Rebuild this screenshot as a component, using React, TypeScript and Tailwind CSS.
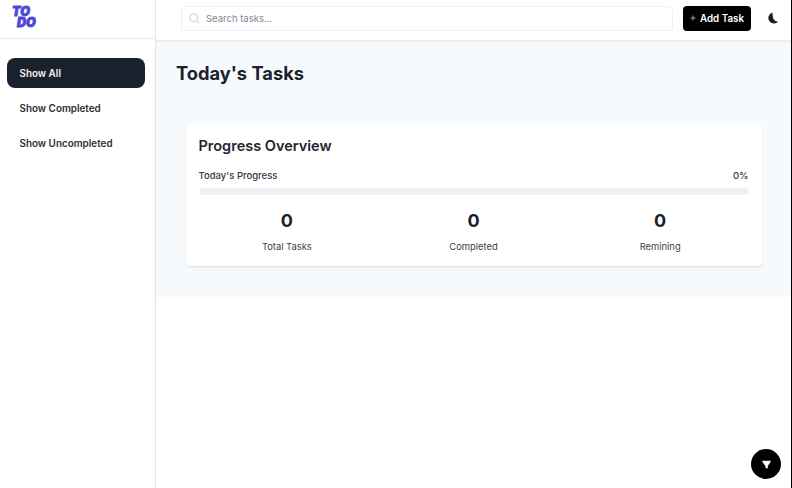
import React from "react";

const navItems = ["Show All", "Show Completed", "Show Uncompleted"];

const stats = [
  { value: 0, label: "Total Tasks" },
  { value: 0, label: "Completed" },
  { value: 0, label: "Remining" },
];

function Logo() {
  return (
    <div className="flex h-[39px] shrink-0 flex-col items-start border-b border-[#e8eaed] pt-[6px] pl-[12px] font-['Inter',sans-serif] text-[12.5px] leading-[11px] font-black text-[#4f46d8] italic [-webkit-text-stroke:0.8px_#4f46d8]">
      <span className="h-[11px]">TO</span>
      <span className="ml-[5px] h-[11px]">DO</span>
    </div>
  );
}

function Sidebar() {
  return (
    <aside className="flex w-[156px] shrink-0 flex-col border-r border-[#e2e5e9]">
      <Logo />
      <nav className="flex flex-col gap-[5px] pt-[19px] pr-[10px] pl-[7px]">
        {navItems.map((item, i) => (
          <button
            key={item}
            className={
              i === 0
                ? "h-[30px] rounded-[8px] bg-[#1a202c] pl-[12.5px] text-left text-[9.9px] font-semibold text-[#f3f4f6]"
                : "h-[30px] rounded-[8px] pl-[12.5px] text-left text-[9.9px] font-semibold text-[#2b303b]"
            }
          >
            {item}
          </button>
        ))}
      </nav>
    </aside>
  );
}

function TopBar() {
  return (
    <header className="flex h-[42px] shrink-0 items-start border-b-2 border-[#eceef0] pt-[6px] pr-[11px] pl-[25px]">
      <div className="flex h-[25px] w-[492px] items-center rounded-[4px] border border-[#edf0f4] pl-[7px]">
        <svg width="11" height="11" viewBox="0 0 11 11" fill="none" stroke="#bcc5d1" strokeWidth="0.9" strokeLinecap="round">
          <circle cx="4.7" cy="4.7" r="3.9" />
          <path d="M7.6 7.6 10.2 10.2" />
        </svg>
        <span className="pt-px pl-[6px] text-[9.5px] text-[#7d8796]">Search tasks...</span>
      </div>
      <button className="ml-[10px] flex h-[25px] w-[68px] items-center rounded-[4px] bg-black pl-[7px] text-white">
        <svg className="mb-px" width="6" height="6" viewBox="0 0 6 6" stroke="#c8c8c8" strokeWidth="0.8">
          <path d="M3 0.5V5.5M0.5 3H5.5" />
        </svg>
        <span className="pt-px pl-[4px] text-[9.8px] font-semibold whitespace-nowrap">Add Task</span>
      </button>
      <svg className="mt-[6px] ml-[17px]" width="11" height="12" viewBox="0 0 11 12" fill="#1a202c">
        <path d="M4.6 0.5A5.6 5.6 0 1 0 10.3 9.5C7.6 9.9 5.4 8.1 5 5.6 4.6 3.6 4.4 1.7 4.6 0.5Z" />
      </svg>
    </header>
  );
}

function ProgressCard() {
  return (
    <section className="mt-[38px] ml-[9.5px] h-[143px] w-[576px] rounded-[4px] bg-white px-[13px] pt-[13px] shadow-[0_1px_2px_rgba(0,0,0,0.12)]">
      <h2 className="text-[14.5px] leading-[20px] font-semibold text-[#22262f]">Progress Overview</h2>
      <div className="mt-[12px] flex justify-between text-[9.5px] leading-[16px] font-medium text-[#343941]">
        <span>Today&apos;s Progress</span>
        <span>0%</span>
      </div>
      <div className="mt-[3.5px] h-[7px] rounded-full bg-[#edf1f5]" />
      <div className="mt-[13.5px] grid grid-cols-3 gap-[10px] text-center">
        {stats.map((s) => (
          <div key={s.label}>
            <div className="text-[18px] leading-[25px] font-bold text-[#1d212b]">{s.value}</div>
            <div className="mt-[6px] text-[9.4px] leading-[15px] text-[#3b4048]">{s.label}</div>
          </div>
        ))}
      </div>
    </section>
  );
}

export default function App() {
  return (
    <div className="relative flex h-[488px] w-[792px] overflow-hidden border-r border-black bg-white font-['Inter',sans-serif]">
      <Sidebar />
      <div className="flex min-w-0 flex-1 flex-col">
        <TopBar />
        <main className="h-[255px] bg-[#f7fafd] pt-[19px] pl-[20px]">
          <h1 className="text-[18.3px] leading-[24px] font-bold text-[#1d212b]">Today&apos;s Tasks</h1>
          <ProgressCard />
        </main>
      </div>
      <button className="absolute right-[10px] bottom-[9px] flex size-[30px] items-center justify-center rounded-full bg-black">
        <svg width="9" height="9" viewBox="0 0 9 9" fill="#fff">
          <path d="M0.4 0.8H8.6V2L5.8 6V8.4L3.4 7.8V6L0.4 2Z" />
        </svg>
      </button>
    </div>
  );
}
